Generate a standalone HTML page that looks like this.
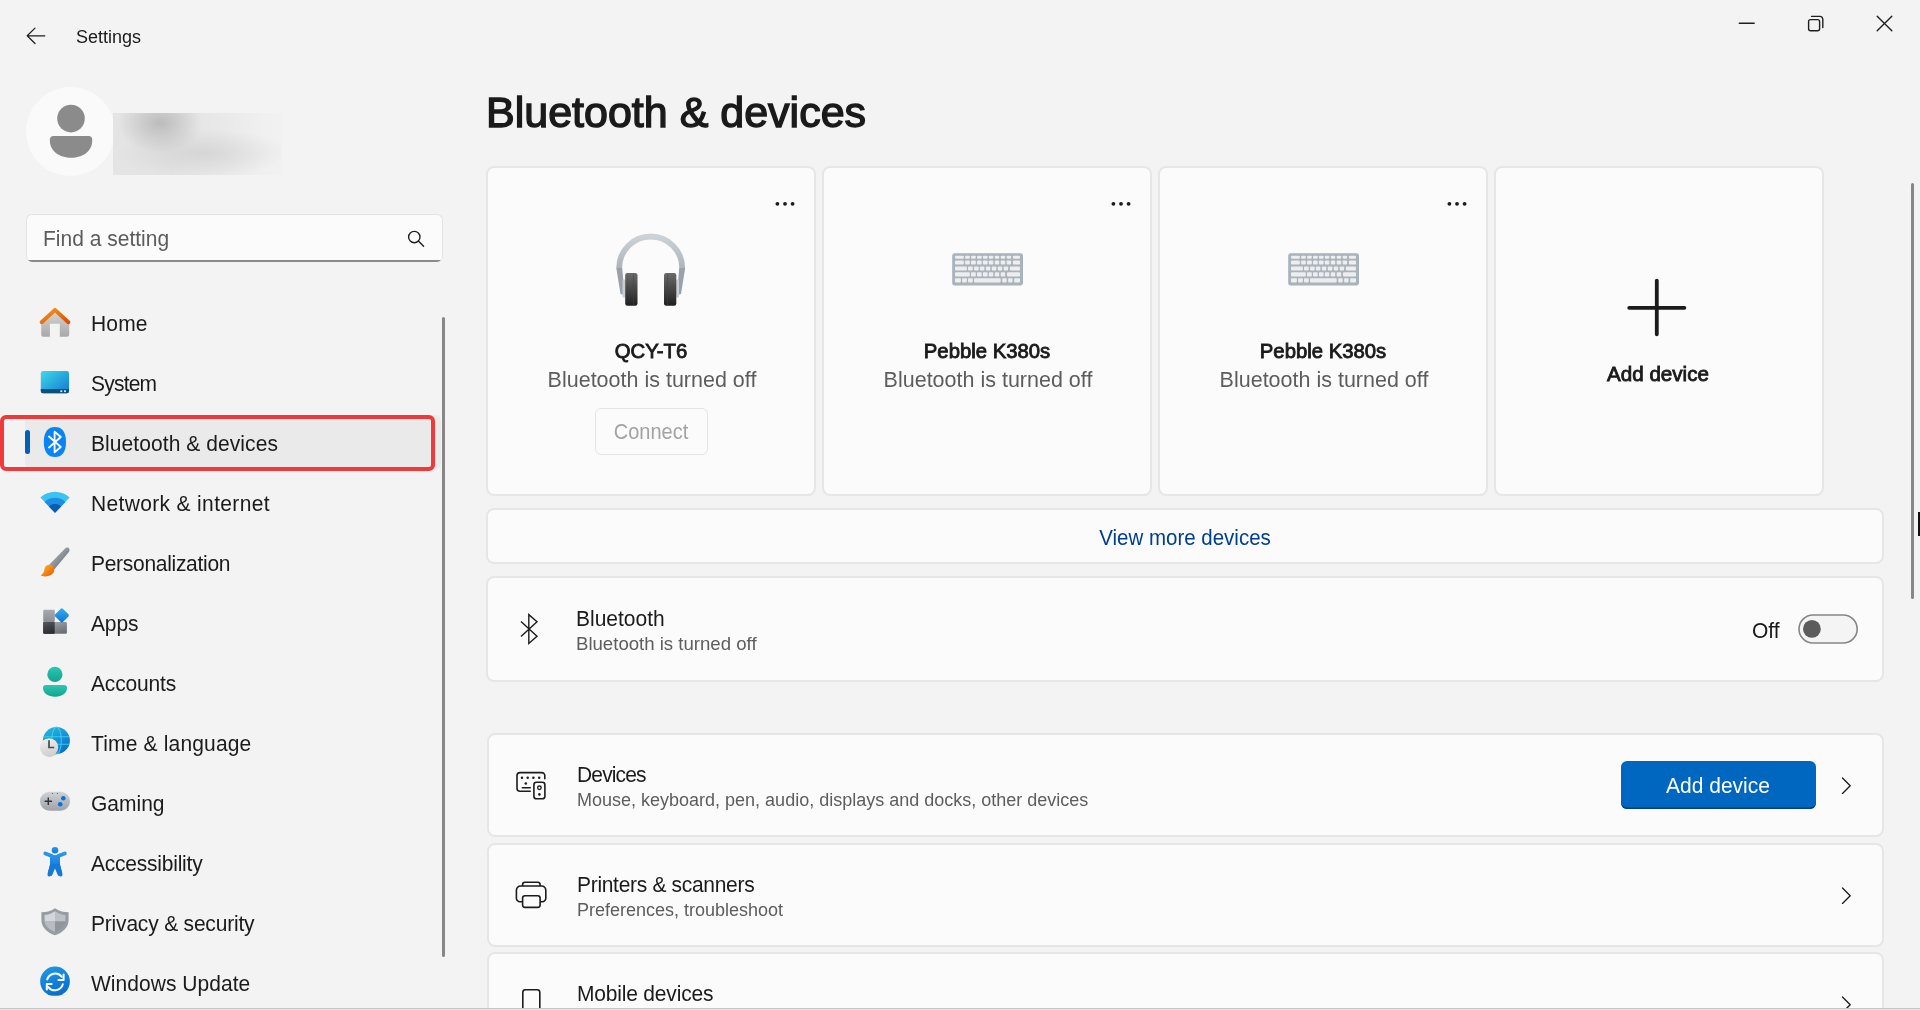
<!DOCTYPE html>
<html><head><meta charset="utf-8"><title>Settings</title><style>
*{margin:0;padding:0;box-sizing:border-box}
html,body{width:1920px;height:1010px;overflow:hidden;background:#f3f3f3;font-family:"Liberation Sans",sans-serif;}
.t{position:absolute;white-space:nowrap;will-change:transform}
.a{position:absolute}
svg{position:absolute;overflow:visible}
.card{position:absolute;background:#fbfbfb;border:2px solid #e6e6e6;border-radius:8px}
</style></head>
<body>
<svg style="left:0;top:0" width="60" height="60"><path d="M27.3 35.8 L44.8 35.8 M35 28.1 L27.2 35.8 L35 43.5" fill="none" stroke="#1f1f1f" stroke-width="1.25" stroke-linecap="round" stroke-linejoin="round"/></svg>
<div class="t" style="left:75.50px;top:24.66px;font-size:18px;line-height:25px;color:#1a1a1a;font-weight:400;;transform:scaleY(1.04);transform-origin:0 18.74px">Settings</div>
<svg style="left:1700px;top:0" width="220" height="50"><path d="M39.3 23.3 H54.2" stroke="#1f1f1f" stroke-width="1.4" stroke-linecap="round" fill="none"/><rect x="108.6" y="19.6" width="11" height="11.2" rx="2" fill="none" stroke="#1f1f1f" stroke-width="1.4"/><path d="M111.6 16.4 H120 a2.8 2.8 0 0 1 2.8 2.8 V27.6" fill="none" stroke="#1f1f1f" stroke-width="1.4" stroke-linecap="round"/><path d="M177.2 16.2 L191.8 30.8 M191.8 16.2 L177.2 30.8" stroke="#1f1f1f" stroke-width="1.4" stroke-linecap="round" fill="none"/></svg>
<div class="a" style="left:26px;top:87px;width:89px;height:89px;border-radius:50%;background:#fafafa"></div>
<svg style="left:0;top:0" width="120" height="180"><circle cx="71" cy="118.6" r="13.8" fill="#8b8b8b"/><path d="M53.5 135.9 H88.6 a3.6 3.6 0 0 1 3.6 3.6 V141 c0 10 -9.5 16.8 -21.1 16.8 c-11.6 0 -21.2 -6.8 -21.2 -16.8 V139.5 a3.6 3.6 0 0 1 3.6 -3.6 z" fill="#8b8b8b"/></svg>
<div class="a" style="left:113px;top:113px;width:169px;height:62px;background:radial-gradient(ellipse 42px 30px at 47px 10px, rgba(178,178,178,0.8), rgba(178,178,178,0) 100%),radial-gradient(ellipse 85px 24px at 90px 40px, rgba(200,200,200,0.55), rgba(200,200,200,0) 100%),linear-gradient(90deg,#e4e4e4 0%,#e3e3e3 35%,#e9e9e9 65%,#f0f0f0 90%,#f1f1f1 100%)"></div>
<div class="a" style="left:26px;top:214px;width:417px;height:48px;background:#fbfbfb;border:1px solid #e3e3e3;border-bottom:none;border-radius:6px;overflow:hidden"><div class="a" style="left:0;right:0;bottom:0;height:2px;background:#8a8a8a"></div></div>
<div class="t" style="left:43.00px;top:224.02px;font-size:21px;line-height:29px;color:#5c5c5c;font-weight:400;;transform:scaleY(1.04);transform-origin:0 21.78px">Find a setting</div>
<svg style="left:0;top:0" width="440" height="260"><circle cx="414.3" cy="237" r="5.7" fill="none" stroke="#1c1c1c" stroke-width="1.35"/><path d="M418.4 241.1 L423.6 246.3" stroke="#1c1c1c" stroke-width="1.35" stroke-linecap="round"/></svg>
<div class="a" style="left:25px;top:415px;width:416px;height:54px;background:#eaeaea;border-radius:6px"></div>
<div class="a" style="left:25px;top:430px;width:5px;height:24px;background:#005fb8;border-radius:3px"></div>
<div class="a" style="left:441.5px;top:316.5px;width:3px;height:640.5px;background:#878787;border-radius:1.5px"></div>
<div class="t" style="left:90.80px;top:309.42px;font-size:21px;line-height:29px;color:#1b1b1b;font-weight:400;letter-spacing:0.167px;transform:scaleY(1.06);transform-origin:0 21.78px">Home</div>
<div class="t" style="left:90.80px;top:369.42px;font-size:21px;line-height:29px;color:#1b1b1b;font-weight:400;letter-spacing:-0.780px;transform:scaleY(1.06);transform-origin:0 21.78px">System</div>
<div class="t" style="left:90.80px;top:429.42px;font-size:21px;line-height:29px;color:#1b1b1b;font-weight:400;letter-spacing:0.072px;transform:scaleY(1.06);transform-origin:0 21.78px">Bluetooth &amp; devices</div>
<div class="t" style="left:90.80px;top:489.42px;font-size:21px;line-height:29px;color:#1b1b1b;font-weight:400;letter-spacing:0.341px;transform:scaleY(1.06);transform-origin:0 21.78px">Network &amp; internet</div>
<div class="t" style="left:90.80px;top:549.42px;font-size:21px;line-height:29px;color:#1b1b1b;font-weight:400;letter-spacing:-0.293px;transform:scaleY(1.06);transform-origin:0 21.78px">Personalization</div>
<div class="t" style="left:90.80px;top:609.42px;font-size:21px;line-height:29px;color:#1b1b1b;font-weight:400;letter-spacing:-0.133px;transform:scaleY(1.06);transform-origin:0 21.78px">Apps</div>
<div class="t" style="left:90.80px;top:669.42px;font-size:21px;line-height:29px;color:#1b1b1b;font-weight:400;letter-spacing:-0.157px;transform:scaleY(1.06);transform-origin:0 21.78px">Accounts</div>
<div class="t" style="left:90.80px;top:729.42px;font-size:21px;line-height:29px;color:#1b1b1b;font-weight:400;letter-spacing:0.164px;transform:scaleY(1.06);transform-origin:0 21.78px">Time &amp; language</div>
<div class="t" style="left:90.80px;top:789.42px;font-size:21px;line-height:29px;color:#1b1b1b;font-weight:400;letter-spacing:0.000px;transform:scaleY(1.06);transform-origin:0 21.78px">Gaming</div>
<div class="t" style="left:90.80px;top:849.42px;font-size:21px;line-height:29px;color:#1b1b1b;font-weight:400;letter-spacing:-0.225px;transform:scaleY(1.06);transform-origin:0 21.78px">Accessibility</div>
<div class="t" style="left:90.80px;top:909.42px;font-size:21px;line-height:29px;color:#1b1b1b;font-weight:400;letter-spacing:-0.194px;transform:scaleY(1.06);transform-origin:0 21.78px">Privacy &amp; security</div>
<div class="t" style="left:90.80px;top:969.42px;font-size:21px;line-height:29px;color:#1b1b1b;font-weight:400;letter-spacing:0.038px;transform:scaleY(1.06);transform-origin:0 21.78px">Windows Update</div>
<svg style="left:0;top:0" width="100" height="1010"><defs><linearGradient id="hmroof" x1="0" y1="0" x2="1" y2="1"><stop offset="0" stop-color="#f59a1b"/><stop offset="1" stop-color="#dd4c07"/></linearGradient><linearGradient id="hmbody" x1="0" y1="0" x2="0" y2="1"><stop offset="0" stop-color="#d9d9d9"/><stop offset="1" stop-color="#a8a8a8"/></linearGradient><linearGradient id="sys" x1="0" y1="0" x2="1" y2="1"><stop offset="0" stop-color="#40d8ea"/><stop offset="1" stop-color="#0e7bd0"/></linearGradient><linearGradient id="acc" x1="0" y1="0" x2="0" y2="1"><stop offset="0" stop-color="#2bc7b3"/><stop offset="1" stop-color="#13a38c"/></linearGradient><linearGradient id="globe" x1="0.2" y1="0" x2="0.8" y2="1"><stop offset="0" stop-color="#25b8dc"/><stop offset="1" stop-color="#0a68cf"/></linearGradient><linearGradient id="clock" x1="0" y1="0" x2="0.3" y2="1"><stop offset="0" stop-color="#f3f3f3"/><stop offset="1" stop-color="#d0d0d0"/></linearGradient><linearGradient id="pad" x1="0" y1="0" x2="0" y2="1"><stop offset="0" stop-color="#d0d3d6"/><stop offset="1" stop-color="#9ea3a8"/></linearGradient><linearGradient id="axs" x1="0" y1="0" x2="0" y2="1"><stop offset="0" stop-color="#2a95e8"/><stop offset="1" stop-color="#1479d8"/></linearGradient><linearGradient id="shl" x1="0" y1="0" x2="0" y2="1"><stop offset="0" stop-color="#c6c9cc"/><stop offset="1" stop-color="#8e9297"/></linearGradient><linearGradient id="upd" x1="0" y1="0" x2="0.4" y2="1"><stop offset="0" stop-color="#1f9be8"/><stop offset="1" stop-color="#0a6fd2"/></linearGradient><linearGradient id="brh" x1="0" y1="0" x2="1" y2="1"><stop offset="0" stop-color="#c0c5ca"/><stop offset="1" stop-color="#575d63"/></linearGradient><linearGradient id="brt" x1="0" y1="0" x2="1" y2="1"><stop offset="0" stop-color="#ffbf1f"/><stop offset="1" stop-color="#e8500c"/></linearGradient><linearGradient id="ap1" x1="0" y1="0" x2="0" y2="1"><stop offset="0" stop-color="#a6aaaf"/><stop offset="1" stop-color="#8b8f94"/></linearGradient><linearGradient id="ap2" x1="0" y1="0" x2="0.3" y2="1"><stop offset="0" stop-color="#55585c"/><stop offset="1" stop-color="#2c2e31"/></linearGradient><linearGradient id="ap3" x1="0" y1="0" x2="0.3" y2="1"><stop offset="0" stop-color="#9da1a6"/><stop offset="1" stop-color="#6c7075"/></linearGradient><linearGradient id="ap4" x1="0" y1="0" x2="1" y2="1"><stop offset="0" stop-color="#35b0f5"/><stop offset="1" stop-color="#0a74d6"/></linearGradient></defs><path d="M41.2 320.5 V334.6 a2.2 2.2 0 0 0 2.2 2.2 H49.9 V323.8 H59.8 V336.8 H67 a2.2 2.2 0 0 0 2.2 -2.2 V320.5 L55 309.5 z" fill="url(#hmbody)"/><path d="M41.6 322.2 L55 309.9 L68.4 322.2" fill="none" stroke="url(#hmroof)" stroke-width="3.9" stroke-linecap="round" stroke-linejoin="round"/><rect x="40.8" y="371" width="28.2" height="22.2" rx="2.2" fill="url(#sys)"/><path d="M40.8 389 H69 V391 a2.2 2.2 0 0 1 -2.2 2.2 H43 a2.2 2.2 0 0 1 -2.2 -2.2 z" fill="#0d4f7c"/><rect x="60.3" y="390.3" width="2" height="1.8" fill="#cfe3f0"/><rect x="64" y="390.3" width="2" height="1.8" fill="#cfe3f0"/><path d="M55 427 C61.8 427 66 431.5 66 442 C66 452.5 61.8 457 55 457 C48.2 457 43.8 452.5 43.8 442 C43.8 431.5 48.2 427 55 427 z" fill="#0a84f5"/><path d="M49 436.5 L60.8 447 L54.6 452.3 V431.7 L60.8 437 L49 447.5" fill="none" stroke="#fff" stroke-width="1.8" stroke-linejoin="round" stroke-linecap="round"/><path d="M40.4 497.6 A21 21 0 0 1 69.6 497.6 L55 512.8 z" fill="#3cc3f2"/><path d="M44.6 502 A15 15 0 0 1 65.4 502 L55 512.8 z" fill="#1c8ee3"/><path d="M48.8 506.4 A9 9 0 0 1 61.2 506.4 L55 512.8 z" fill="#0b5bb0"/><path d="M65.3 548.3 C66.5 547.2 68.6 547.4 69.3 549 C69.7 550 69.5 551.2 68.9 552.1 L54.3 569.6 L49.4 564.6 z" fill="url(#brh)"/><path d="M49 564.7 C52.6 564.4 54.8 567.4 54.2 570.6 C53.6 574.6 49 576.6 45 576.5 C43 576.4 41.5 576 40.7 575.3 C42.5 574 44 572.5 44.3 570 C44.6 567 46 564.9 49 564.7 z" fill="url(#brt)"/><rect x="43.2" y="609.8" width="11.6" height="12.2" rx="1.3" fill="url(#ap1)"/><rect x="43.2" y="622" width="11.6" height="11.8" rx="1.3" fill="url(#ap2)"/><path d="M43.2 622 H54.8 V633.8 H44.5 a1.3 1.3 0 0 1 -1.3 -1.3 z" fill="url(#ap2)"/><path d="M54.8 622 H65.6 a1.3 1.3 0 0 1 1.3 1.3 V632.5 a1.3 1.3 0 0 1 -1.3 1.3 H54.8 z" fill="url(#ap3)"/><rect x="56.4" y="610" width="10.8" height="10.8" rx="1.5" transform="rotate(45 61.8 615.4)" fill="url(#ap4)"/><circle cx="54.9" cy="674.4" r="7.6" fill="url(#acc)"/><path d="M46 685 H64 a3 3 0 0 1 3 3 c0 5 -5 8.7 -12 8.7 c-7 0 -12 -3.7 -12 -8.7 a3 3 0 0 1 3 -3 z" fill="url(#acc)"/><circle cx="56.4" cy="740.5" r="13.5" fill="url(#globe)"/><path d="M43.5 736.7 H69.3 M43.3 744.2 H69.5" stroke="#3dd3ec" stroke-width="1.1" fill="none" opacity="0.85"/><ellipse cx="56.5" cy="740.5" rx="4.8" ry="13.4" fill="none" stroke="#3dd3ec" stroke-width="1.1" opacity="0.85"/><circle cx="49.6" cy="747.9" r="9.1" fill="#7a7a7a" opacity="0.35"/><circle cx="49.1" cy="747.3" r="9.1" fill="url(#clock)"/><path d="M49 740.3 V747.5 H54.2" fill="none" stroke="#4a4a4a" stroke-width="1.7"/><rect x="40" y="791.7" width="30" height="19" rx="9.5" fill="url(#pad)"/><path d="M48.3 797.5 V805 M44.6 801.3 H52" stroke="#333" stroke-width="1.45"/><circle cx="63.3" cy="798.3" r="2.3" fill="#0a74d6"/><circle cx="60.2" cy="804.3" r="2.3" fill="#0a74d6"/><circle cx="52.5" cy="793.5" r="0.6" fill="#555"/><circle cx="57.5" cy="793.5" r="0.6" fill="#555"/><circle cx="55" cy="850.2" r="3.3" fill="url(#axs)"/><path d="M45.3 853.4 L52 856 M64.8 853.4 L58 856 M51.6 866 L49.4 874.6 M58.4 866 L60.6 874.6" fill="none" stroke="url(#axs)" stroke-width="3.8" stroke-linecap="round" stroke-linejoin="round"/><path d="M50 856 Q55 854 60 856 V866 Q60 868 58 868 H52 Q50 868 50 866 z" fill="url(#axs)"/><path d="M50.2 864 L47.6 873.4 L51.8 876 L55 868.5 L58.2 876 L62.4 873.4 L59.8 864 z" fill="#1479d8"/><path d="M55 908.3 C59.5 911.4 64 912.3 68.6 912.3 V920 C68.6 927.5 62.5 932.8 55 935.3 C47.5 932.8 41.4 927.5 41.4 920 V912.3 C46 912.3 50.5 911.4 55 908.3 z" fill="#979ca2"/><path d="M55 911.3 C58.5 913.5 62 914.9 65.4 915.1 V921.6 H55 z" fill="#bcc1c7"/><path d="M55 911.3 C51.5 913.5 48 914.9 44.6 915.1 V921.6 H55 z" fill="#d3d7dc"/><path d="M44.6 921.6 H55 V932 C49.5 929.8 45.2 926.4 44.6 921.6 z" fill="#b8bcc2"/><path d="M65.4 921.6 H55 V932 C60.5 929.8 64.8 926.4 65.4 921.6 z" fill="#91969c"/><clipPath id="updclip"><rect x="38" y="960" width="34" height="35.8"/></clipPath><circle cx="55" cy="981.4" r="14.85" fill="url(#upd)" clip-path="url(#updclip)"/><path d="M47.2 979.4 A8.3 8.3 0 0 1 61.6 976.6 M62.8 984.3 A8.3 8.3 0 0 1 48.3 987.1" fill="none" stroke="#fff" stroke-width="2" stroke-linecap="round"/><path d="M58.4 980.1 H63.6 V974.6 M51.6 984.1 H46.8 V989.5" fill="none" stroke="#fff" stroke-width="2" stroke-linecap="round" stroke-linejoin="round"/></svg>
<div class="a" style="left:0px;top:415px;width:435px;height:56px;border:4.3px solid #ef3a3c;border-radius:6px"></div>
<div class="t" style="left:486.00px;top:81.89px;font-size:43px;line-height:60px;color:#1a1a1a;font-weight:400;-webkit-text-stroke:1.4px #1a1a1a">Bluetooth &amp; devices</div>
<div class="card" style="left:486px;top:166px;width:330px;height:330px"></div>
<div class="card" style="left:822px;top:166px;width:330px;height:330px"></div>
<div class="card" style="left:1158px;top:166px;width:330px;height:330px"></div>
<div class="card" style="left:1494px;top:166px;width:330px;height:330px"></div>
<svg style="left:0;top:0" width="1" height="1"><circle cx="777.4" cy="203.8" r="1.9" fill="#1a1a1a"/><circle cx="785" cy="203.8" r="1.9" fill="#1a1a1a"/><circle cx="792.6" cy="203.8" r="1.9" fill="#1a1a1a"/></svg>
<svg style="left:0;top:0" width="700" height="320"><defs><linearGradient id="cup" x1="0" y1="0" x2="0" y2="1"><stop offset="0" stop-color="#6b6b6b"/><stop offset="1" stop-color="#202020"/></linearGradient><linearGradient id="band" x1="0" y1="0" x2="0" y2="1"><stop offset="0" stop-color="#cdd2d7"/><stop offset="1" stop-color="#aeb4ba"/></linearGradient></defs><path d="M619.2 268 A31.5 31.5 0 0 1 682.2 268" fill="none" stroke="url(#band)" stroke-width="5.8"/><path d="M616.3 268 H622.2 L624.5 295 L620.5 294 z M685.2 268 H679.2 L677 295 L681 294 z" fill="#9aa1a8"/><rect x="622.5" y="279.5" width="3" height="18" rx="1" fill="#c9ced3"/><rect x="676" y="279.5" width="3" height="18" rx="1" fill="#c9ced3"/><rect x="625.2" y="273" width="12.3" height="32.8" rx="2.2" fill="url(#cup)"/><rect x="664" y="273" width="12.3" height="32.8" rx="2.2" fill="url(#cup)"/><path d="M633.5 274 V305 M667.6 274 V305" stroke="#444" stroke-width="0.7" opacity="0.7"/></svg>
<div class="t" style="left:151.00px;width:1000px;text-align:center;top:337.26px;font-size:20.3px;line-height:28px;color:#1a1a1a;font-weight:400;-webkit-text-stroke:0.85px #1a1a1a">QCY-T6</div>
<div class="t" style="left:151.90px;width:1000px;text-align:center;top:364.95px;font-size:21.5px;line-height:30px;color:#5d5d5d;font-weight:400;;transform:scaleY(1.06);transform-origin:0 22.45px">Bluetooth is turned off</div>
<div class="a" style="left:594.5px;top:407.5px;width:113px;height:47px;border:1px solid #e5e5e5;border-radius:6px;background:#fbfbfb"></div>
<div class="t" style="left:151.00px;width:1000px;text-align:center;top:418.07px;font-size:20px;line-height:28px;color:#a3a3a3;font-weight:400;;transform:scaleY(1.07);transform-origin:0 20.93px">Connect</div>
<svg style="left:0;top:0" width="1" height="1"><circle cx="1113.4" cy="203.8" r="1.9" fill="#1a1a1a"/><circle cx="1121" cy="203.8" r="1.9" fill="#1a1a1a"/><circle cx="1128.6" cy="203.8" r="1.9" fill="#1a1a1a"/></svg>
<svg style="left:951.9px;top:253.4px" width="71" height="33"><rect x="0.2" y="0.2" width="70.8" height="32.2" rx="2.6" fill="#aab2bb"/><rect x="3" y="2.67" width="8.90" height="2.97" rx="0.8" fill="#eceef0"/><rect x="13.07" y="2.67" width="4.73" height="2.97" rx="0.8" fill="#eceef0"/><rect x="19" y="2.67" width="4.80" height="2.97" rx="0.8" fill="#eceef0"/><rect x="25" y="2.67" width="4.70" height="2.97" rx="0.8" fill="#eceef0"/><rect x="30.9" y="2.67" width="4.70" height="2.97" rx="0.8" fill="#eceef0"/><rect x="36.8" y="2.67" width="4.50" height="2.97" rx="0.8" fill="#eceef0"/><rect x="42.8" y="2.67" width="4.40" height="2.97" rx="0.8" fill="#eceef0"/><rect x="48.7" y="2.67" width="4.50" height="2.97" rx="0.8" fill="#eceef0"/><rect x="54.7" y="2.67" width="4.40" height="2.97" rx="0.8" fill="#eceef0"/><rect x="60.9" y="2.67" width="7.10" height="2.97" rx="0.8" fill="#eceef0"/><rect x="3" y="7.43" width="8.90" height="4.17" rx="0.8" fill="#eceef0"/><rect x="13.07" y="7.43" width="4.73" height="4.17" rx="0.8" fill="#eceef0"/><rect x="19" y="7.43" width="4.80" height="4.17" rx="0.8" fill="#eceef0"/><rect x="25" y="7.43" width="4.70" height="4.17" rx="0.8" fill="#eceef0"/><rect x="30.9" y="7.43" width="4.70" height="4.17" rx="0.8" fill="#eceef0"/><rect x="36.8" y="7.43" width="4.50" height="4.17" rx="0.8" fill="#eceef0"/><rect x="42.8" y="7.43" width="4.40" height="4.17" rx="0.8" fill="#eceef0"/><rect x="48.7" y="7.43" width="4.50" height="4.17" rx="0.8" fill="#eceef0"/><rect x="54.7" y="7.43" width="4.40" height="4.17" rx="0.8" fill="#eceef0"/><rect x="60.9" y="7.43" width="7.10" height="4.17" rx="0.8" fill="#eceef0"/><rect x="3" y="13.4" width="11.90" height="4.10" rx="0.8" fill="#eceef0"/><rect x="16" y="13.4" width="4.80" height="4.10" rx="0.8" fill="#eceef0"/><rect x="22" y="13.4" width="4.70" height="4.10" rx="0.8" fill="#eceef0"/><rect x="27.9" y="13.4" width="4.50" height="4.10" rx="0.8" fill="#eceef0"/><rect x="33.9" y="13.4" width="4.40" height="4.10" rx="0.8" fill="#eceef0"/><rect x="39.8" y="13.4" width="4.50" height="4.10" rx="0.8" fill="#eceef0"/><rect x="45.8" y="13.4" width="4.40" height="4.10" rx="0.8" fill="#eceef0"/><rect x="51.7" y="13.4" width="4.40" height="4.10" rx="0.8" fill="#eceef0"/><rect x="57.9" y="13.4" width="10.10" height="4.10" rx="0.8" fill="#eceef0"/><rect x="3" y="19.3" width="14.80" height="4.20" rx="0.8" fill="#eceef0"/><rect x="19" y="19.3" width="4.80" height="4.20" rx="0.8" fill="#eceef0"/><rect x="25" y="19.3" width="4.70" height="4.20" rx="0.8" fill="#eceef0"/><rect x="30.9" y="19.3" width="4.70" height="4.20" rx="0.8" fill="#eceef0"/><rect x="36.8" y="19.3" width="4.50" height="4.20" rx="0.8" fill="#eceef0"/><rect x="42.8" y="19.3" width="4.40" height="4.20" rx="0.8" fill="#eceef0"/><rect x="48.7" y="19.3" width="4.50" height="4.20" rx="0.8" fill="#eceef0"/><rect x="55" y="19.3" width="13.00" height="4.20" rx="0.8" fill="#eceef0"/><rect x="3" y="25.25" width="5.90" height="4.15" rx="0.8" fill="#eceef0"/><rect x="10.1" y="25.25" width="4.80" height="4.15" rx="0.8" fill="#eceef0"/><rect x="16" y="25.25" width="4.80" height="4.15" rx="0.8" fill="#eceef0"/><rect x="22" y="25.25" width="26.70" height="4.15" rx="0.8" fill="#eceef0"/><rect x="50.2" y="25.25" width="4.50" height="4.15" rx="0.8" fill="#eceef0"/><rect x="56.1" y="25.25" width="4.50" height="4.15" rx="0.8" fill="#eceef0"/><rect x="62.1" y="25.25" width="5.90" height="4.15" rx="0.8" fill="#eceef0"/></svg>
<div class="t" style="left:487.00px;width:1000px;text-align:center;top:337.26px;font-size:20.3px;line-height:28px;color:#1a1a1a;font-weight:400;-webkit-text-stroke:0.85px #1a1a1a">Pebble K380s</div>
<div class="t" style="left:487.90px;width:1000px;text-align:center;top:364.95px;font-size:21.5px;line-height:30px;color:#5d5d5d;font-weight:400;;transform:scaleY(1.06);transform-origin:0 22.45px">Bluetooth is turned off</div>
<svg style="left:0;top:0" width="1" height="1"><circle cx="1449.4" cy="203.8" r="1.9" fill="#1a1a1a"/><circle cx="1457" cy="203.8" r="1.9" fill="#1a1a1a"/><circle cx="1464.6" cy="203.8" r="1.9" fill="#1a1a1a"/></svg>
<svg style="left:1287.9px;top:253.4px" width="71" height="33"><rect x="0.2" y="0.2" width="70.8" height="32.2" rx="2.6" fill="#aab2bb"/><rect x="3" y="2.67" width="8.90" height="2.97" rx="0.8" fill="#eceef0"/><rect x="13.07" y="2.67" width="4.73" height="2.97" rx="0.8" fill="#eceef0"/><rect x="19" y="2.67" width="4.80" height="2.97" rx="0.8" fill="#eceef0"/><rect x="25" y="2.67" width="4.70" height="2.97" rx="0.8" fill="#eceef0"/><rect x="30.9" y="2.67" width="4.70" height="2.97" rx="0.8" fill="#eceef0"/><rect x="36.8" y="2.67" width="4.50" height="2.97" rx="0.8" fill="#eceef0"/><rect x="42.8" y="2.67" width="4.40" height="2.97" rx="0.8" fill="#eceef0"/><rect x="48.7" y="2.67" width="4.50" height="2.97" rx="0.8" fill="#eceef0"/><rect x="54.7" y="2.67" width="4.40" height="2.97" rx="0.8" fill="#eceef0"/><rect x="60.9" y="2.67" width="7.10" height="2.97" rx="0.8" fill="#eceef0"/><rect x="3" y="7.43" width="8.90" height="4.17" rx="0.8" fill="#eceef0"/><rect x="13.07" y="7.43" width="4.73" height="4.17" rx="0.8" fill="#eceef0"/><rect x="19" y="7.43" width="4.80" height="4.17" rx="0.8" fill="#eceef0"/><rect x="25" y="7.43" width="4.70" height="4.17" rx="0.8" fill="#eceef0"/><rect x="30.9" y="7.43" width="4.70" height="4.17" rx="0.8" fill="#eceef0"/><rect x="36.8" y="7.43" width="4.50" height="4.17" rx="0.8" fill="#eceef0"/><rect x="42.8" y="7.43" width="4.40" height="4.17" rx="0.8" fill="#eceef0"/><rect x="48.7" y="7.43" width="4.50" height="4.17" rx="0.8" fill="#eceef0"/><rect x="54.7" y="7.43" width="4.40" height="4.17" rx="0.8" fill="#eceef0"/><rect x="60.9" y="7.43" width="7.10" height="4.17" rx="0.8" fill="#eceef0"/><rect x="3" y="13.4" width="11.90" height="4.10" rx="0.8" fill="#eceef0"/><rect x="16" y="13.4" width="4.80" height="4.10" rx="0.8" fill="#eceef0"/><rect x="22" y="13.4" width="4.70" height="4.10" rx="0.8" fill="#eceef0"/><rect x="27.9" y="13.4" width="4.50" height="4.10" rx="0.8" fill="#eceef0"/><rect x="33.9" y="13.4" width="4.40" height="4.10" rx="0.8" fill="#eceef0"/><rect x="39.8" y="13.4" width="4.50" height="4.10" rx="0.8" fill="#eceef0"/><rect x="45.8" y="13.4" width="4.40" height="4.10" rx="0.8" fill="#eceef0"/><rect x="51.7" y="13.4" width="4.40" height="4.10" rx="0.8" fill="#eceef0"/><rect x="57.9" y="13.4" width="10.10" height="4.10" rx="0.8" fill="#eceef0"/><rect x="3" y="19.3" width="14.80" height="4.20" rx="0.8" fill="#eceef0"/><rect x="19" y="19.3" width="4.80" height="4.20" rx="0.8" fill="#eceef0"/><rect x="25" y="19.3" width="4.70" height="4.20" rx="0.8" fill="#eceef0"/><rect x="30.9" y="19.3" width="4.70" height="4.20" rx="0.8" fill="#eceef0"/><rect x="36.8" y="19.3" width="4.50" height="4.20" rx="0.8" fill="#eceef0"/><rect x="42.8" y="19.3" width="4.40" height="4.20" rx="0.8" fill="#eceef0"/><rect x="48.7" y="19.3" width="4.50" height="4.20" rx="0.8" fill="#eceef0"/><rect x="55" y="19.3" width="13.00" height="4.20" rx="0.8" fill="#eceef0"/><rect x="3" y="25.25" width="5.90" height="4.15" rx="0.8" fill="#eceef0"/><rect x="10.1" y="25.25" width="4.80" height="4.15" rx="0.8" fill="#eceef0"/><rect x="16" y="25.25" width="4.80" height="4.15" rx="0.8" fill="#eceef0"/><rect x="22" y="25.25" width="26.70" height="4.15" rx="0.8" fill="#eceef0"/><rect x="50.2" y="25.25" width="4.50" height="4.15" rx="0.8" fill="#eceef0"/><rect x="56.1" y="25.25" width="4.50" height="4.15" rx="0.8" fill="#eceef0"/><rect x="62.1" y="25.25" width="5.90" height="4.15" rx="0.8" fill="#eceef0"/></svg>
<div class="t" style="left:823.00px;width:1000px;text-align:center;top:337.26px;font-size:20.3px;line-height:28px;color:#1a1a1a;font-weight:400;-webkit-text-stroke:0.85px #1a1a1a">Pebble K380s</div>
<div class="t" style="left:823.90px;width:1000px;text-align:center;top:364.95px;font-size:21.5px;line-height:30px;color:#5d5d5d;font-weight:400;;transform:scaleY(1.06);transform-origin:0 22.45px">Bluetooth is turned off</div>
<svg style="left:0;top:0" width="1" height="1"><path d="M1656.8 280.6 V334.3 M1629.2 307.8 H1684.4" stroke="#1c1c1c" stroke-width="3.8" stroke-linecap="round"/></svg>
<div class="t" style="left:1158.00px;width:1000px;text-align:center;top:358.96px;font-size:20.6px;line-height:29px;color:#1a1a1a;font-weight:400;-webkit-text-stroke:0.85px #1a1a1a">Add device</div>
<div class="card" style="left:486px;top:508px;width:1398px;height:56px"></div>
<div class="t" style="left:685.20px;width:1000px;text-align:center;top:523.39px;font-size:20.5px;line-height:29px;color:#003e92;font-weight:400;;transform:scaleY(1.09);transform-origin:0 21.61px">View more devices</div>
<div class="card" style="left:486px;top:576px;width:1398px;height:106px"></div>
<svg style="left:0;top:0" width="1" height="1"><path d="M521 621.5 L537 636.2 L528.8 643.5 V614.6 L537 621.8 L521 636.5" fill="none" stroke="#1c1c1c" stroke-width="1.4" stroke-linejoin="miter" stroke-linecap="butt"/></svg>
<div class="t" style="left:576.00px;top:604.22px;font-size:21px;line-height:29px;color:#1b1b1b;font-weight:400;;transform:scaleY(1.04);transform-origin:0 21.78px">Bluetooth</div>
<div class="t" style="left:576.00px;top:631.05px;font-size:18.6px;line-height:26px;color:#5d5d5d;font-weight:400;">Bluetooth is turned off</div>
<div class="t" style="left:1751.50px;top:615.92px;font-size:21px;line-height:29px;color:#1b1b1b;font-weight:400;;transform:scaleY(1.07);transform-origin:0 21.78px">Off</div>
<svg style="left:0;top:0" width="1" height="1"><rect x="1799" y="615" width="58.2" height="28" rx="14" fill="#f4f4f4" stroke="#868686" stroke-width="1.6"/><circle cx="1811.9" cy="628.9" r="8.9" fill="#5c5c5c"/></svg>
<div class="card" style="left:487px;top:733px;width:1397px;height:104px"></div>
<svg style="left:0;top:0" width="1" height="1"><path d="M530.2 791.2 H520 a3 3 0 0 1 -3 -3 V775.6 a3 3 0 0 1 3 -3 H541.8 a3 3 0 0 1 3 3 V778.8" fill="none" stroke="#1c1c1c" stroke-width="1.6" stroke-linecap="round"/><rect x="533.9" y="782.3" width="11" height="16.5" rx="2.6" fill="none" stroke="#1c1c1c" stroke-width="1.6"/><circle cx="522" cy="777.8" r="1.25" fill="#1c1c1c"/><circle cx="527.7" cy="777.8" r="1.25" fill="#1c1c1c"/><circle cx="533.4" cy="777.8" r="1.25" fill="#1c1c1c"/><circle cx="539.2" cy="777.8" r="1.25" fill="#1c1c1c"/><circle cx="525.8" cy="783.6" r="1.25" fill="#1c1c1c"/><path d="M522.3 787.8 H530.3" stroke="#1c1c1c" stroke-width="1.6" stroke-linecap="round"/><circle cx="539.4" cy="787.8" r="1.8" fill="none" stroke="#1c1c1c" stroke-width="1.3"/><circle cx="539.4" cy="794.4" r="1.3" fill="#1c1c1c"/></svg>
<div class="t" style="left:577.00px;top:760.12px;font-size:21px;line-height:29px;color:#1b1b1b;font-weight:400;letter-spacing:-0.85px;transform:scaleY(1.04);transform-origin:0 21.78px">Devices</div>
<div class="t" style="left:576.50px;top:787.76px;font-size:18px;line-height:25px;color:#5d5d5d;font-weight:400;">Mouse, keyboard, pen, audio, displays and docks, other devices</div>
<div class="a" style="left:1621px;top:761px;width:195px;height:48px;border-radius:6px;background:#0067c0;box-shadow:inset 0 -1.5px 0 #003f82"></div>
<div class="t" style="left:1217.50px;width:1000px;text-align:center;top:771.12px;font-size:21px;line-height:29px;color:#ffffff;font-weight:400;;transform:scaleY(1.06);transform-origin:0 21.78px">Add device</div>
<svg style="left:0;top:0" width="1" height="1"><path d="M1842.5 778 L1850.2 785.7 L1842.5 793.4" fill="none" stroke="#1c1c1c" stroke-width="1.35" stroke-linecap="round" stroke-linejoin="round"/></svg>
<div class="card" style="left:487px;top:843px;width:1397px;height:104px"></div>
<svg style="left:0;top:0" width="1" height="1"><path d="M522.6 886 V884.6 a2.3 2.3 0 0 1 2.3 -2.3 H537.8 a2.3 2.3 0 0 1 2.3 2.3 V886" fill="none" stroke="#1c1c1c" stroke-width="1.6"/><path d="M522.3 901.8 H520 a3.6 3.6 0 0 1 -3.6 -3.6 V890.2 a4.2 4.2 0 0 1 4.2 -4.2 H541.6 a4.2 4.2 0 0 1 4.2 4.2 V898.2 a3.6 3.6 0 0 1 -3.6 3.6 H540.1" fill="none" stroke="#1c1c1c" stroke-width="1.6"/><rect x="522.6" y="895.8" width="17.5" height="11.6" rx="2.3" fill="#fbfbfb" stroke="#1c1c1c" stroke-width="1.6"/></svg>
<div class="t" style="left:577.00px;top:870.22px;font-size:21px;line-height:29px;color:#1b1b1b;font-weight:400;letter-spacing:-0.31px;transform:scaleY(1.04);transform-origin:0 21.78px">Printers &amp; scanners</div>
<div class="t" style="left:576.50px;top:897.66px;font-size:18px;line-height:25px;color:#5d5d5d;font-weight:400;">Preferences, troubleshoot</div>
<svg style="left:0;top:0" width="1" height="1"><path d="M1842.5 888 L1850.2 895.7 L1842.5 903.4" fill="none" stroke="#1c1c1c" stroke-width="1.35" stroke-linecap="round" stroke-linejoin="round"/></svg>
<div class="card" style="left:487px;top:952px;width:1397px;height:120px"></div>
<svg style="left:0;top:0" width="1" height="1"><rect x="522.8" y="989.8" width="17" height="30" rx="2.6" fill="none" stroke="#1c1c1c" stroke-width="1.6"/></svg>
<div class="t" style="left:577.00px;top:978.82px;font-size:21px;line-height:29px;color:#1b1b1b;font-weight:400;letter-spacing:-0.19px;transform:scaleY(1.04);transform-origin:0 21.78px">Mobile devices</div>
<svg style="left:0;top:0" width="1" height="1"><path d="M1842.5 997 L1850.2 1004.7 L1842.5 1012.4" fill="none" stroke="#1c1c1c" stroke-width="1.35" stroke-linecap="round" stroke-linejoin="round"/></svg>
<div class="a" style="left:1911.2px;top:182.6px;width:3px;height:416px;background:#878787;border-radius:1.5px"></div>
<div class="a" style="left:1918px;top:512px;width:2px;height:24px;background:#111"></div>
<div class="a" style="left:0;top:1007.5px;width:1920px;height:1.5px;background:#c4c4c4"></div>
<div class="a" style="left:0;top:1009px;width:1920px;height:1px;background:#e8e8e8"></div>

</body></html>
